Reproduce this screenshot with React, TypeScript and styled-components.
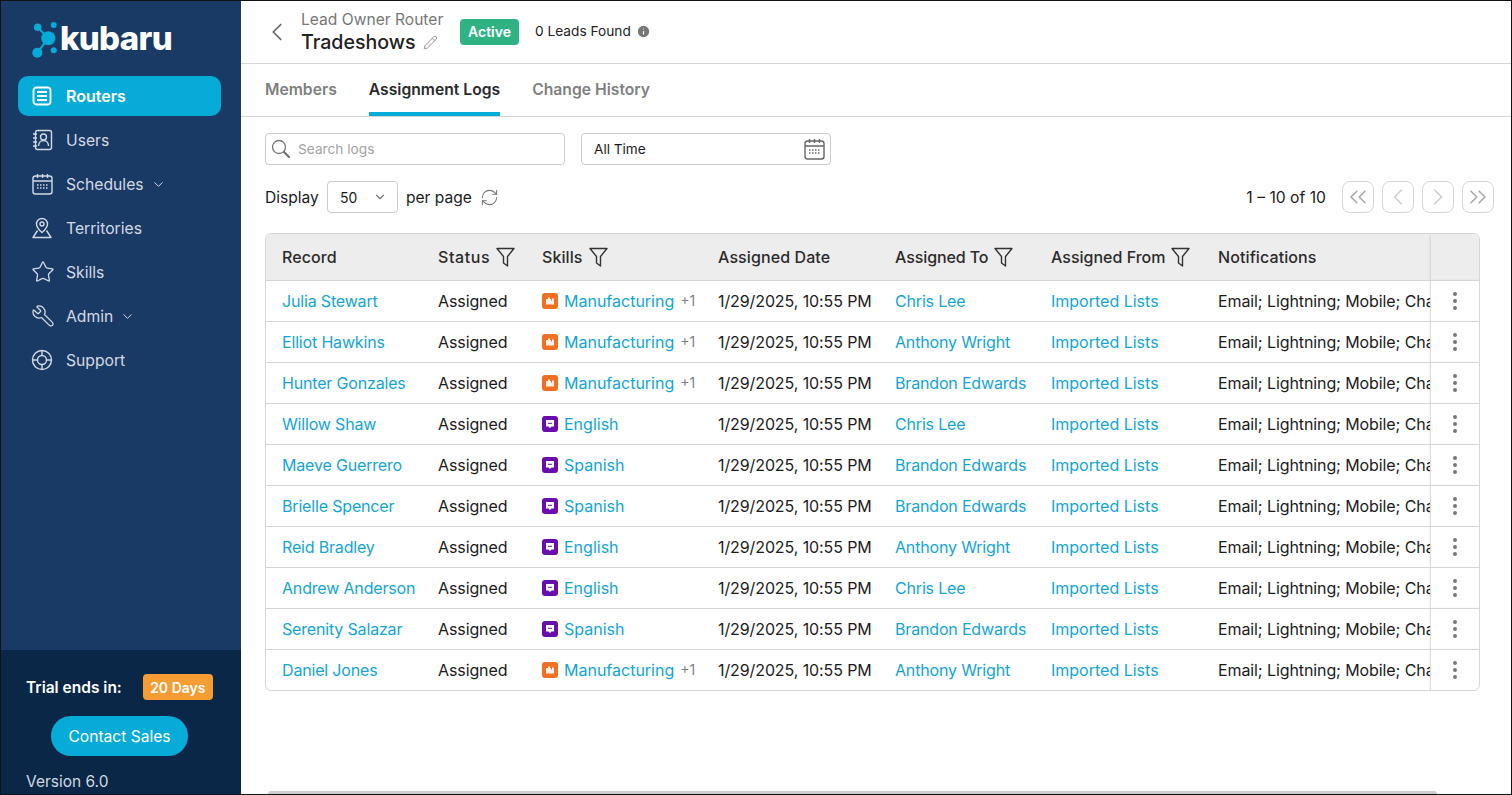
import { ReactNode } from 'react';
import styled, { createGlobalStyle } from 'styled-components';
import {
  ChevronDown,
  ChevronLeft,
  ChevronRight,
  ChevronsLeft,
  ChevronsRight,
  EllipsisVertical,
  Info,
  Pencil,
  RefreshCw,
  Star,
  Wrench,
} from 'lucide-react';

const GlobalStyle = createGlobalStyle`
  * { box-sizing: border-box; }
  html, body { margin: 0; height: 100%; overflow: hidden; }
  body {
    font-family: Inter, "Liberation Sans", sans-serif;
    color: #1b1b1b;
    background: #fff;
  }
`;

const BLUE = '#06abd8';

type LogRow = {
  record: string;
  skill: 'Manufacturing' | 'English' | 'Spanish';
  to: string;
};

const rows: LogRow[] = [
  { record: 'Julia Stewart', skill: 'Manufacturing', to: 'Chris Lee' },
  { record: 'Elliot Hawkins', skill: 'Manufacturing', to: 'Anthony Wright' },
  { record: 'Hunter Gonzales', skill: 'Manufacturing', to: 'Brandon Edwards' },
  { record: 'Willow Shaw', skill: 'English', to: 'Chris Lee' },
  { record: 'Maeve Guerrero', skill: 'Spanish', to: 'Brandon Edwards' },
  { record: 'Brielle Spencer', skill: 'Spanish', to: 'Brandon Edwards' },
  { record: 'Reid Bradley', skill: 'English', to: 'Anthony Wright' },
  { record: 'Andrew Anderson', skill: 'English', to: 'Chris Lee' },
  { record: 'Serenity Salazar', skill: 'Spanish', to: 'Brandon Edwards' },
  { record: 'Daniel Jones', skill: 'Manufacturing', to: 'Anthony Wright' },
];

function RoutersIcon() {
  return (
    <svg width="22" height="22" viewBox="0 0 22 22" fill="none" stroke="currentColor" strokeWidth="1.8">
      <rect x="2.500" y="2.500" width="17" height="17" rx="3" />
      <path d="M6 7h10M6 11h10M6 15h10" />
    </svg>
  );
}

function UsersIcon() {
  return (
    <svg width="22" height="22" viewBox="0 0 22 22" fill="none" stroke="currentColor" strokeWidth="1.400">
      <rect x="4.500" y="1.500" width="16" height="19" rx="2" />
      <path d="M2 5h4M2 9h4M2 13h4M2 17h4" />
      <circle cx="12.500" cy="8" r="3" />
      <path d="M7.500 17c0-3 2-5.500 5-5.500s5 2.500 5 5.500" />
    </svg>
  );
}

function CalendarIcon() {
  return (
    <svg width="22" height="22" viewBox="0 0 22 22" fill="none" stroke="currentColor" strokeWidth="1.400">
      <rect x="2" y="3" width="19" height="18" rx="2.500" />
      <path d="M2 8h19M6.500 1v4M11.500 1v4M16.500 1v4" />
      <path d="M6 12h11M6 15h11" strokeDasharray="1.500 1.500" />
    </svg>
  );
}

function TerritoryIcon() {
  return (
    <svg width="22" height="22" viewBox="0 0 22 22" fill="none" stroke="currentColor" strokeWidth="1.400">
      <path d="M11 15.500C8 13 5.500 10.500 5.500 7a5.500 5.500 0 0 1 11 0c0 3.500-2.500 6-5.500 8.500z" />
      <circle cx="11" cy="7" r="2" />
      <path d="M6.500 13.500 2 20.500h18l-4.500-7" strokeLinejoin="round" />
    </svg>
  );
}

function SupportIcon() {
  return (
    <svg width="22" height="22" viewBox="0 0 22 22" fill="none" stroke="currentColor" strokeWidth="1.400">
      <circle cx="11" cy="11" r="9.500" />
      <circle cx="11" cy="11" r="4.500" />
      <path d="M11 1.500v5M11 15.500v5M1.500 11h5M15.500 11h5" />
    </svg>
  );
}

function SearchIcon() {
  return (
    <svg width="20" height="20" viewBox="0 0 20 20" fill="none" stroke="#777">
      <circle cx="8" cy="8" r="6.500" strokeWidth="1.300" />
      <path d="M13 13l5 5" strokeWidth="2.400" strokeLinecap="round" />
    </svg>
  );
}

function FilterIcon() {
  return (
    <svg width="19" height="20" viewBox="0 0 19 20" fill="none" stroke="#333" strokeWidth="1.400" strokeLinejoin="round">
      <path d="M1 1.500h17l-6.500 8V19L7.500 16V9.500z" />
    </svg>
  );
}

function Logo() {
  return (
    <svg width="29" height="38" viewBox="0 0 29 38" fill="none">
      <path d="M5.700 6.300 16.300 17.300 5.300 31.700" stroke={BLUE} strokeWidth="2" />
      <circle cx="5.700" cy="6.300" r="3.800" fill={BLUE} />
      <circle cx="21.700" cy="4" r="3" fill={BLUE} />
      <circle cx="16.300" cy="17.300" r="7" fill={BLUE} />
      <circle cx="21.700" cy="29.300" r="3" fill={BLUE} />
      <circle cx="5.300" cy="31.700" r="5" fill={BLUE} />
    </svg>
  );
}

function SkillBadge({ skill }: { skill: LogRow['skill'] }) {
  if (skill === 'Manufacturing') {
    return (
      <SkillIcon $color="#f26f21">
        <svg width="16" height="16" viewBox="0 0 16 16" fill="#fff">
          <path d="M4 11.500V6h2V4.500h2V6h1V7.500h1V5.500h2v6z" opacity="0.9" />
        </svg>
      </SkillIcon>
    );
  }
  return (
    <SkillIcon $color="#6a0dad">
      <svg width="16" height="16" viewBox="0 0 16 16" fill="#fff">
        <path d="M4 4h8v6.500H9.500L8 12l-1.500-1.500H4z" />
        <path d="M6 7.300h4" stroke="#6a0dad" strokeWidth="1" />
      </svg>
    </SkillIcon>
  );
}

export default function App() {
  const navItems: { label: string; icon: ReactNode; caret?: boolean; active?: boolean }[] = [
    { label: 'Routers', icon: <RoutersIcon />, active: true },
    { label: 'Users', icon: <UsersIcon /> },
    { label: 'Schedules', icon: <CalendarIcon />, caret: true },
    { label: 'Territories', icon: <TerritoryIcon /> },
    { label: 'Skills', icon: <Star size={24} strokeWidth={1.3} /> },
    { label: 'Admin', icon: <FlippedIcon><Wrench size={24} strokeWidth={1.3} /></FlippedIcon>, caret: true },
    { label: 'Support', icon: <SupportIcon /> },
  ];

  return (
    <Page>
      <GlobalStyle />
      <Sidebar>
        <LogoRow>
          <Logo />
          <LogoText>kubaru</LogoText>
        </LogoRow>
        <Nav>
          {navItems.map((item) => (
            <NavItem key={item.label} $active={item.active}>
              <NavIcon>{item.icon}</NavIcon>
              {item.label}
              {item.caret && <ChevronDown size={15} strokeWidth={1.6} />}
            </NavItem>
          ))}
        </Nav>
        <SidebarFooter>
          <TrialRow>
            <TrialLabel>Trial ends in:</TrialLabel>
            <TrialBadge>20 Days</TrialBadge>
          </TrialRow>
          <ContactButton>Contact Sales</ContactButton>
          <Version>Version 6.0</Version>
        </SidebarFooter>
      </Sidebar>

      <Main>
        <Header>
          <BackButton>
            <ChevronLeft size={30} strokeWidth={1.4} />
          </BackButton>
          <TitleBlock>
            <Breadcrumb>Lead Owner Router</Breadcrumb>
            <TitleRow>
              <Title>Tradeshows</Title>
              <Pencil size={15} strokeWidth={1.3} color="#777" />
            </TitleRow>
          </TitleBlock>
          <StatusPill>Active</StatusPill>
          <LeadsFound>
            0 Leads Found
            <Info size={15} fill="#777" color="#fff" strokeWidth={1.8} />
          </LeadsFound>
        </Header>

        <Tabs>
          <Tab>Members</Tab>
          <Tab $active>Assignment Logs</Tab>
          <Tab>Change History</Tab>
        </Tabs>

        <Content>
          <FilterRow>
            <SearchBox>
              <SearchIcon />
              <SearchText>Search logs</SearchText>
            </SearchBox>
            <DateBox>
              All Time
              <DateIcon><CalendarIcon /></DateIcon>
            </DateBox>
          </FilterRow>

          <PagerRow>
            <DisplayGroup>
              Display
              <PageSize>
                50
                <ChevronDown size={14} color="#777" />
              </PageSize>
              per page
              <RefreshCw size={19} strokeWidth={1.3} color="#777" />
            </DisplayGroup>
            <PagerGroup>
              <PageCount>1 – 10 of 10</PageCount>
              <PagerButton><ChevronsLeft size={28} strokeWidth={1.3} /></PagerButton>
              <PagerButton $dim><ChevronLeft size={28} strokeWidth={1.3} /></PagerButton>
              <PagerButton $dim><ChevronRight size={28} strokeWidth={1.3} /></PagerButton>
              <PagerButton><ChevronsRight size={28} strokeWidth={1.3} /></PagerButton>
            </PagerGroup>
          </PagerRow>

          <TableWrap>
            <Table>
              <colgroup>
                <col width={156} />
                <col width={104} />
                <col width={176} />
                <col width={177} />
                <col width={156} />
                <col width={167} />
                <col width={228} />
                <col width={50} />
              </colgroup>
              <thead>
                <tr>
                  <Th><HeadLabel>Record</HeadLabel></Th>
                  <Th><HeadLabel $spacing={0.6}>Status<FilterIcon /></HeadLabel></Th>
                  <Th><HeadLabel>Skills<FilterIcon /></HeadLabel></Th>
                  <Th><HeadLabel>Assigned Date</HeadLabel></Th>
                  <Th><HeadLabel $spacing={-0.1}>Assigned To<FilterIcon /></HeadLabel></Th>
                  <Th><HeadLabel $spacing={0}>Assigned From<FilterIcon /></HeadLabel></Th>
                  <Th><HeadLabel>Notifications</HeadLabel></Th>
                  <ActionHead />
                </tr>
              </thead>
              <tbody>
                {rows.map((row) => (
                  <tr key={row.record}>
                    <Td><NameLink>{row.record}</NameLink></Td>
                    <PlainTd>Assigned</PlainTd>
                    <Td>
                      <SkillCell>
                        <SkillBadge skill={row.skill} />
                        <LinkText>{row.skill}</LinkText>
                        {row.skill === 'Manufacturing' && <MoreCount>+1</MoreCount>}
                      </SkillCell>
                    </Td>
                    <PlainTd>1/29/2025, 10:55 PM</PlainTd>
                    <Td><NameLink>{row.to}</NameLink></Td>
                    <Td><LinkText>Imported Lists</LinkText></Td>
                    <PlainTd>Email; Lightning; Mobile; Chatter</PlainTd>
                    <ActionCell>
                      <EllipsisVertical size={24} color="#777" strokeWidth={2} />
                    </ActionCell>
                  </tr>
                ))}
              </tbody>
            </Table>
          </TableWrap>
        </Content>
        <ScrollThumb />
      </Main>
    </Page>
  );
}

const Page = styled.div`
  display: flex;
  height: 100vh;
  border: 1px solid #111;
  overflow: hidden;
`;

const Sidebar = styled.aside`
  width: 240px;
  flex: none;
  display: flex;
  flex-direction: column;
  background: #1a3a66;
  color: #d3d9e2;
`;

const LogoRow = styled.div`
  display: flex;
  align-items: flex-start;
  padding: 20px 0 0 31px;
  height: 75px;
`;

const LogoText = styled.span`
  margin: -2px 0 0 -1px;
  font-size: 33px;
  font-weight: 800;
  color: #fff;
  letter-spacing: -0.7px;
  line-height: 38px;
`;

const Nav = styled.nav`
  display: flex;
  flex-direction: column;
  gap: 4px;
  padding: 0 20px 0 17px;
  flex: 1;
`;

const NavItem = styled.div<{ $active?: boolean }>`
  display: flex;
  align-items: center;
  gap: 7px;
  height: 40px;
  padding-left: 13px;
  border-radius: 10px;
  font-size: ${(p) => (p.$active ? '16px' : '15.7px')};
  font-weight: ${(p) => (p.$active ? 600 : 400)};
  color: ${(p) => (p.$active ? '#fff' : '#d3d9e2')};
  background: ${(p) => (p.$active ? BLUE : 'transparent')};
`;

const NavIcon = styled.span`
  display: flex;
  width: 28px;
`;

const FlippedIcon = styled.span`
  display: flex;
  transform: scaleX(-1);
`;

const SidebarFooter = styled.div`
  height: 144px;
  background: #0a2748;
  padding: 24px 0 0 25px;
`;

const TrialRow = styled.div`
  display: flex;
  align-items: center;
  gap: 21px;
`;

const TrialLabel = styled.span`
  font-size: 15.5px;
  font-weight: 600;
  color: #fff;
`;

const TrialBadge = styled.span`
  background: #f59d33;
  color: #fff;
  font-size: 14px;
  font-weight: 600;
  width: 70px;
  height: 26px;
  border-radius: 4px;
  display: flex;
  align-items: center;
  justify-content: center;
`;

const ContactButton = styled.button`
  display: block;
  margin: 16px 0 0 25px;
  width: 137px;
  height: 40px;
  border: none;
  border-radius: 20px;
  background: ${BLUE};
  color: #fff;
  font: 400 15.6px Inter, sans-serif;
`;

const Version = styled.div`
  margin-top: 16px;
  font-size: 15.5px;
  color: #d3d9e2;
`;

const Main = styled.main`
  flex: 1;
  min-width: 0;
  display: flex;
  flex-direction: column;
`;

const Header = styled.header`
  display: flex;
  align-items: center;
  height: 63px;
  flex: none;
  border-bottom: 1px solid #d6d6d6;
  padding-left: 21px;
`;

const BackButton = styled.div`
  display: flex;
  width: 39px;
  color: #666;
`;

const TitleBlock = styled.div`
  display: flex;
  flex-direction: column;
  width: 159px;
  margin-top: 2px;
`;

const Breadcrumb = styled.div`
  font-size: 15.6px;
  color: #777;
  line-height: 18px;
  white-space: nowrap;
`;

const TitleRow = styled.div`
  display: flex;
  align-items: center;
  gap: 7px;
`;

const Title = styled.div`
  font-size: 19.600px;
  font-weight: 500;
  line-height: 26px;
  color: #222;
`;

const StatusPill = styled.div`
  width: 59px;
  height: 26px;
  padding-bottom: 1px;
  border-radius: 4px;
  background: #2fb383;
  color: #fff;
  font-size: 14px;
  font-weight: 600;
  display: flex;
  align-items: center;
  justify-content: center;
`;

const LeadsFound = styled.div`
  display: flex;
  align-items: center;
  gap: 5px;
  margin: -2px 0 0 16px;
  font-size: 13.7px;
  color: #222;
`;

const Tabs = styled.div`
  display: flex;
  gap: 32px;
  height: 53px;
  flex: none;
  padding-left: 24px;
  border-bottom: 1px solid #d6d6d6;
`;

const Tab = styled.div<{ $active?: boolean }>`
  display: flex;
  align-items: center;
  padding-top: 3px;
  font-size: 15.7px;
  font-weight: 600;
  color: ${(p) => (p.$active ? '#2b2b2b' : '#808080')};
  border-bottom: 4px solid ${(p) => (p.$active ? BLUE : 'transparent')};
`;

const Content = styled.div`
  padding: 16px 17px 0 24px;
`;

const FilterRow = styled.div`
  display: flex;
  gap: 16px;
`;

const SearchBox = styled.div`
  display: flex;
  align-items: center;
  gap: 7px;
  width: 300px;
  height: 32px;
  padding-left: 5px;
  border: 1px solid #ccc;
  border-radius: 4px;
`;

const SearchText = styled.span`
  font-size: 13.7px;
  color: #a3a3a3;
`;

const DateBox = styled.div`
  display: flex;
  align-items: center;
  justify-content: space-between;
  width: 250px;
  height: 32px;
  padding: 0 5px 0 12px;
  border: 1px solid #ccc;
  border-radius: 4px;
  font-size: 13.6px;
`;

const DateIcon = styled.span`
  display: flex;
  color: #666;
`;

const PagerRow = styled.div`
  display: flex;
  align-items: center;
  justify-content: space-between;
  margin-top: 16px;
  height: 32px;
`;

const DisplayGroup = styled.div`
  display: flex;
  align-items: center;
  gap: 8px;
  font-size: 15.6px;
`;

const PageSize = styled.div`
  display: flex;
  align-items: center;
  justify-content: space-between;
  width: 71px;
  height: 32px;
  padding: 0 10px 0 12px;
  border: 1px solid #ccc;
  border-radius: 4px;
  font-size: 14px;
`;

const PagerGroup = styled.div`
  display: flex;
  align-items: center;
  gap: 8px;
`;

const PageCount = styled.span`
  font-size: 15.7px;
  margin-right: 8px;
`;

const PagerButton = styled.div<{ $dim?: boolean }>`
  display: flex;
  align-items: center;
  justify-content: center;
  width: 32px;
  height: 32px;
  border: 1px solid #d6d6d6;
  border-radius: 8px;
  color: ${(p) => (p.$dim ? '#cfcfcf' : '#a6a6a6')};
`;

const TableWrap = styled.div`
  margin-top: 20px;
  width: 1215px;
  border: 1px solid #d6d6d6;
  border-radius: 6px;
  overflow: hidden;
`;

const Table = styled.table`
  width: 1214px;
  table-layout: fixed;
  border-collapse: collapse;
`;

const Th = styled.th`
  height: 46px;
  padding: 0 0 0 16px;
  background: #ededed;
  border-bottom: 1px solid #d6d6d6;
`;

const HeadLabel = styled.div<{ $spacing?: number }>`
  display: flex;
  align-items: center;
  gap: 6px;
  text-align: left;
  font-size: 16px;
  font-weight: 500;
  letter-spacing: ${(p) => p.$spacing ?? 0.1}px;
  color: #2b2b2b;
  white-space: nowrap;
`;

const ActionHead = styled.th`
  background: #ededed;
  border-bottom: 1px solid #d6d6d6;
  box-shadow: inset 1px 0 0 #dcdcdc, -1px 0 2px rgba(0, 0, 0, 0.05);
`;

const Td = styled.td`
  height: 41px;
  padding: 0 0 0 16px;
  font-size: 16px;
  color: #1b1b1b;
  white-space: nowrap;
  overflow: hidden;
  border-bottom: 1px solid #d6d6d6;
  tr:last-child & { border-bottom: none; }
`;

const PlainTd = styled(Td)`
  letter-spacing: -0.1px;
`;

const ActionCell = styled.td`
  text-align: center;
  border-bottom: 1px solid #d6d6d6;
  box-shadow: inset 1px 0 0 #dcdcdc, -1px 0 2px rgba(0, 0, 0, 0.05);
  tr:last-child & { border-bottom: none; }
  svg { vertical-align: middle; }
`;

const LinkText = styled.span`
  color: #13a5d8;
`;

const NameLink = styled(LinkText)`
  letter-spacing: -0.17px;
`;

const SkillCell = styled.div`
  display: flex;
  align-items: center;
  gap: 6px;
`;

const SkillIcon = styled.span<{ $color: string }>`
  display: flex;
  width: 16px;
  height: 16px;
  border-radius: 3px;
  background: ${(p) => p.$color};
`;

const MoreCount = styled.span`
  font-size: 14px;
  color: #808080;
`;

const ScrollThumb = styled.div`
  flex: none;
  margin: auto 0 0 27px;
  width: 1169px;
  height: 3px;
  border-radius: 3px 3px 0 0;
  background: #cdcdcd;
`;
